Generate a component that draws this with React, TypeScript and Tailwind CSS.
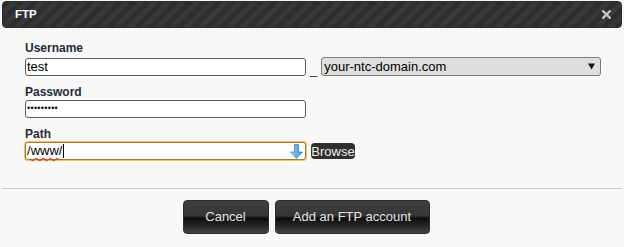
import React from "react";

export default function App() {
  return (
    <div className="w-[624px] h-[247px] bg-[#f8f8f8] font-['Liberation_Sans',Arial,sans-serif] overflow-hidden">
      {/* Header */}
      <div className="pt-[1px] px-[2px]">
        <div className="h-[27px] rounded-[4px] flex items-center justify-between pl-[12px] pr-[10px] bg-[image:repeating-linear-gradient(135deg,#2e2e2e_0px,#2e2e2e_5px,#383838_5px,#383838_10px)] border border-[#2a2a2a]">
          <span className="text-white font-bold text-[11.5px] leading-none">FTP</span>
          <svg width="9" height="9" viewBox="0 0 9 9">
            <path d="M1.2 1.2 L7.8 7.8 M7.8 1.2 L1.2 7.8" stroke="#c4c4c4" strokeWidth="2.3" strokeLinecap="square" />
          </svg>
        </div>
      </div>

      {/* Form */}
      <div className="pl-[25px] pt-[13px] flex flex-col gap-[9px]">
        <div className="flex flex-col gap-[2px]">
          <label className="text-[12px] leading-[14px] font-bold text-[#262b36]">Username</label>
          <div className="flex items-center">
            <div className="w-[281px] h-[18px] bg-white border border-[#5a5a5a] rounded-[3px] flex items-center px-[1px] text-[13px] text-black">
              test
            </div>
            <span className="mx-[4px] text-[13px] text-[#333] leading-none mt-[6px]">_</span>
            <div className="w-[280px] h-[19px] bg-[#dedede] border border-[#7b7b7b] rounded-[3px] flex items-center justify-between pl-[2px] pr-[5px] text-[13px] text-black">
              <span>your-ntc-domain.com</span>
              <svg width="7" height="7" viewBox="0 0 7 7">
                <polygon points="0,0.5 7,0.5 3.5,6.5" fill="#111" />
              </svg>
            </div>
          </div>
        </div>

        <div className="flex flex-col gap-[1px]">
          <label className="text-[12px] leading-[14px] font-bold text-[#262b36]">Password</label>
          <div className="w-[281px] h-[18px] bg-white border border-[#5a5a5a] rounded-[3px] flex items-center px-[1px] text-[9px] text-black tracking-[0.3px]">
            •••••••••
          </div>
        </div>

        <div className="flex flex-col gap-[1px]">
          <label className="text-[12px] leading-[14px] font-bold text-[#262b36]">Path</label>
          <div className="flex items-center">
            <div className="w-[281px] h-[18px] bg-white border border-[#a27b35] shadow-[0_0_0_1px_#f0c262] rounded-[3px] flex items-center justify-between pl-[1px] pr-[2px] text-[13px] text-black">
              <span className="flex items-center">
                /<span className="underline decoration-wavy decoration-[#e02020] decoration-1 underline-offset-2">www</span>/
                <span className="inline-block w-[1px] h-[14px] bg-black ml-[1px]" />
              </span>
              <svg width="13" height="15" viewBox="0 0 13 15">
                <defs>
                  <linearGradient id="ag" x1="0" y1="0" x2="1" y2="0">
                    <stop offset="0" stopColor="#9fd2f7" />
                    <stop offset="1" stopColor="#3a8fdc" />
                  </linearGradient>
                </defs>
                <path d="M4.5 0.5 H8.5 V8 H12.5 L6.5 14.5 L0.5 8 H4.5 Z" fill="url(#ag)" stroke="#3b86c9" strokeWidth="0.8" />
              </svg>
            </div>
            <div className="ml-[5px] h-[16px] w-[44px] bg-[#2f2f2f] rounded-[4px] flex items-center justify-center text-[13px] text-[#eeeeee] leading-none">
              Browse
            </div>
          </div>
        </div>
      </div>

      {/* Separator */}
      <div className="mt-[28px] mx-[2px] h-[1px] bg-[#cccccc]" />

      {/* Buttons */}
      <div className="flex justify-center gap-[6px] mt-[11px] pr-[12px]">
        <div className="w-[86px] h-[34px] rounded-[4px] border border-[#2c2c2c] bg-[image:linear-gradient(to_bottom,#404040_0%,#353535_46%,#0e0e0e_54%,#262626_78%,#454545_100%)] flex items-center justify-center text-[13px] text-[#e4e4e4]">
          Cancel
        </div>
        <div className="w-[155px] h-[34px] rounded-[4px] border border-[#2c2c2c] bg-[image:linear-gradient(to_bottom,#404040_0%,#353535_46%,#0e0e0e_54%,#262626_78%,#454545_100%)] flex items-center justify-center text-[13px] text-[#e4e4e4]">
          Add an FTP account
        </div>
      </div>
    </div>
  );
}
